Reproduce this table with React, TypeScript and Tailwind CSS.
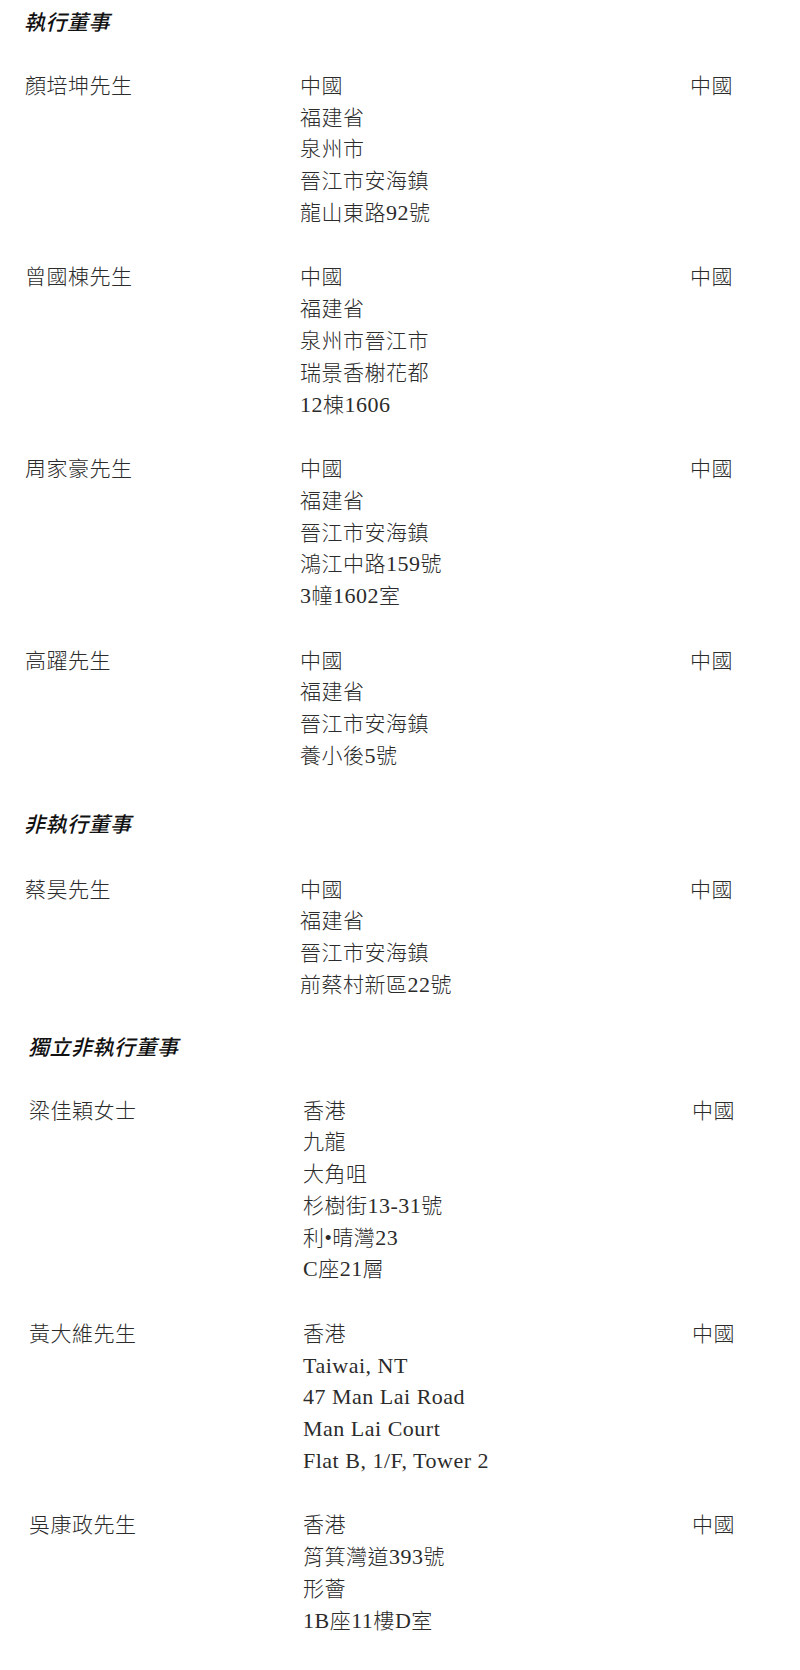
type Director = {
  name: string;
  address: string[];
  country: string;
};

type Section = {
  title: string;
  directors: Director[];
};

const sections: Section[] = [
  {
    title: "執行董事",
    directors: [
      { name: "顏培坤先生", address: ["中國", "福建省", "泉州市", "晉江市安海鎮", "龍山東路92號"], country: "中國" },
      { name: "曾國棟先生", address: ["中國", "福建省", "泉州市晉江市", "瑞景香榭花都", "12棟1606"], country: "中國" },
      { name: "周家豪先生", address: ["中國", "福建省", "晉江市安海鎮", "鴻江中路159號", "3幢1602室"], country: "中國" },
      { name: "高躍先生", address: ["中國", "福建省", "晉江市安海鎮", "養小後5號"], country: "中國" },
    ],
  },
  {
    title: "非執行董事",
    directors: [
      { name: "蔡昊先生", address: ["中國", "福建省", "晉江市安海鎮", "前蔡村新區22號"], country: "中國" },
    ],
  },
  {
    title: "獨立非執行董事",
    directors: [
      { name: "梁佳穎女士", address: ["香港", "九龍", "大角咀", "杉樹街13-31號", "利•晴灣23", "C座21層"], country: "中國" },
      { name: "黃大維先生", address: ["香港", "Taiwai, NT", "47 Man Lai Road", "Man Lai Court", "Flat B, 1/F, Tower 2"], country: "中國" },
      { name: "吳康政先生", address: ["香港", "筲箕灣道393號", "形薈", "1B座11樓D室"], country: "中國" },
    ],
  },
];

// per-section spacing, matched to the scanned page
const sectionStyles = [
  { wrap: "pl-[24px]", title: "mb-[33px]", grid: "grid-cols-[276px_390px_1fr]" },
  { wrap: "pl-[24px] mt-[35px]", title: "mb-[35px]", grid: "grid-cols-[276px_390px_1fr]" },
  { wrap: "pl-[28px] mt-[29px]", title: "mb-[33px]", grid: "grid-cols-[275px_389px_1fr]" },
];

// latin letters and digits are set a touch larger in the original print
function Line({ text }: { text: string }) {
  const parts = text.split(/([A-Za-z0-9][A-Za-z0-9 ,/\-]*)/);
  return (
    <div className="h-[31.8px] overflow-visible whitespace-nowrap">
      {parts.map((p, i) =>
        /^[A-Za-z0-9]/.test(p) ? (
          <span key={i} className="text-[22px] leading-none tracking-[0.5px]">
            {p}
          </span>
        ) : (
          <span key={i}>{p}</span>
        )
      )}
    </div>
  );
}

function DirectorRow({ director, grid }: { director: Director; grid: string }) {
  return (
    <div className={`grid ${grid}`}>
      <div className="pl-[1px]">{director.name}</div>
      <div className="flex flex-col">
        {director.address.map((line, i) => (
          <Line key={i} text={line} />
        ))}
      </div>
      <div>{director.country}</div>
    </div>
  );
}

export default function App() {
  return (
    <div className="min-h-[1670px] w-[800px] bg-white pt-[6px] text-[#2b2b2b]">
      {sections.map((section, si) => {
        const st = sectionStyles[si];
        return (
          <section key={section.title} className={st.wrap}>
            <h2
              className={`${st.title} font-['Noto_Sans_CJK_TC',sans-serif] text-[21px] leading-[31.8px] font-medium italic tracking-[0.5px] text-[#111]`}
            >
              {section.title}
            </h2>
            <div className="flex flex-col gap-[32.6px] font-['Liberation_Serif','Noto_Sans_CJK_TC',serif] text-[21px] leading-[31.8px] font-light tracking-[0.5px]">
              {section.directors.map((d) => (
                <DirectorRow key={d.name} director={d} grid={st.grid} />
              ))}
            </div>
          </section>
        );
      })}
    </div>
  );
}
